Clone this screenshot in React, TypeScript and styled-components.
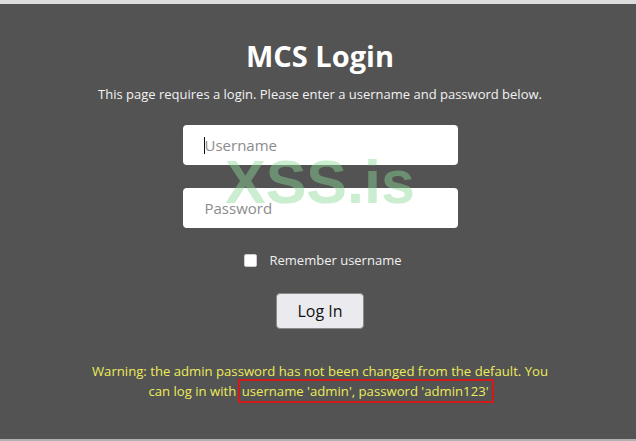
import styled, { createGlobalStyle } from 'styled-components';

const GlobalStyle = createGlobalStyle`
  html, body {
    margin: 0;
    padding: 0;
    background: #535353;
  }
  body {
    font-family: "Open Sans", "Noto Sans", Arial, sans-serif;
  }
`;

const Page = styled.div`
  position: relative;
  width: 636px;
  height: 441px;
  box-sizing: border-box;
  padding-left: 4px;
  background: #535353;
  border-top: 4px solid #dcdcdc;
  border-bottom: 2px solid #b0b0b0;
  display: flex;
  flex-direction: column;
  align-items: center;
  overflow: hidden;
`;

const Title = styled.h1`
  margin: 35px 0 0;
  font-size: 29px;
  line-height: 34px;
  font-weight: 700;
  color: #ffffff;
`;

const Intro = styled.p`
  margin: 12px 0 0;
  font-size: 13px;
  line-height: 18px;
  color: #f2f2f2;
`;

const Form = styled.form`
  display: flex;
  flex-direction: column;
  align-items: center;
  margin-top: 22px;
`;

const FieldBox = styled.div`
  position: relative;
  margin-bottom: 23px;
`;

const Field = styled.input`
  display: block;
  width: 275px;
  height: 40px;
  box-sizing: border-box;
  border: none;
  border-radius: 4px;
  padding: 0 0 0 22px;
  font-family: "Open Sans", "Noto Sans", Arial, sans-serif;
  font-size: 15px;
  background: #fff;
  outline: none;

  &::placeholder {
    color: #8c8c8c;
  }
`;

const Caret = styled.span`
  position: absolute;
  left: 21px;
  top: 12px;
  width: 1px;
  height: 17px;
  background: #111;
`;

const CheckRow = styled.label`
  display: flex;
  align-items: center;
  gap: 13px;
  font-size: 13px;
  color: #f0f0f0;
  margin-left: 5px;
`;

const Check = styled.input`
  width: 13px;
  height: 13px;
  margin: 0;
  appearance: none;
  background: #fff;
  border: 1px solid #ccc;
  border-radius: 2px;
  box-sizing: border-box;
`;

const Submit = styled.button`
  margin-top: 24px;
  width: 88px;
  height: 36px;
  border: 1px solid #8a8a8a;
  border-radius: 4px;
  background: #ebebef;
  color: #111;
  font-family: "Open Sans", "Noto Sans", Arial, sans-serif;
  font-size: 16px;
  padding: 0;
`;

const Warning = styled.p`
  margin: 32px 0 0;
  width: 472px;
  text-align: center;
  font-size: 13.15px;
  line-height: 20px;
  color: #ecec5a;
`;

const Marked = styled.span`
  outline: 2px solid #d11a1a;
  padding: 1px 3px 1px 2px;
`;

const Watermark = styled.div`
  position: absolute;
  left: 225px;
  top: 143px;
  font-family: "Liberation Sans", Arial, sans-serif;
  font-weight: 700;
  font-size: 61px;
  color: rgba(140, 215, 150, 0.45);
  pointer-events: none;
`;

export default function App() {
  return (
    <>
      <GlobalStyle />
      <Page>
        <Title>MCS Login</Title>
        <Intro>This page requires a login. Please enter a username and password below.</Intro>
        <Form onSubmit={(e) => e.preventDefault()}>
          <FieldBox>
            <Field type="text" placeholder="Username" />
            <Caret />
          </FieldBox>
          <FieldBox>
            <Field type="password" placeholder="Password" />
          </FieldBox>
          <CheckRow>
            <Check type="checkbox" />
            Remember username
          </CheckRow>
          <Submit type="submit">Log In</Submit>
        </Form>
        <Warning>
          Warning: the admin password has not been changed from the default. You can log in with{' '}
          <Marked>username 'admin', password 'admin123'</Marked>
        </Warning>
        <Watermark>XSS.is</Watermark>
      </Page>
    </>
  );
}
